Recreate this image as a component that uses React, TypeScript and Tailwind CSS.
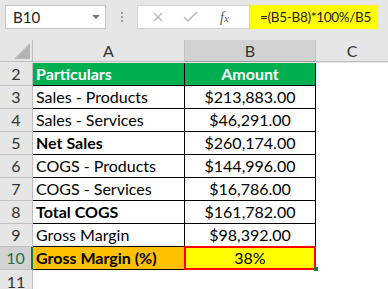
import React from "react";

interface Row {
  n: number;
  label: string;
  amount: string;
  bold?: boolean;
}

const rows: Row[] = [
  { n: 3, label: "Sales - Products", amount: "$213,883.00" },
  { n: 4, label: "Sales - Services", amount: "$46,291.00" },
  { n: 5, label: "Net Sales", amount: "$260,174.00", bold: true },
  { n: 6, label: "COGS - Products", amount: "$144,996.00" },
  { n: 7, label: "COGS - Services", amount: "$16,786.00" },
  { n: 8, label: "Total COGS", amount: "$161,782.00", bold: true },
  { n: 9, label: "Gross Margin", amount: "$98,392.00" },
];

const font = { fontFamily: "Lato, 'Open Sans', sans-serif" };

export default function App() {
  return (
    <div className="w-[388px] h-[289px] overflow-hidden bg-[#e6e6e6] text-[16px]" style={font}>
      {/* formula bar */}
      <div className="flex items-center h-[40px] pb-[6px] pl-[5px]">
        <div className="flex shrink-0 items-center justify-between w-[101px] h-[24px] bg-white border border-[#c6c6c6] pl-[7px] pr-[5px] text-[#222] text-[15px]">
          <span>B10</span>
          <span className="w-0 h-0 border-l-[4px] border-r-[4px] border-t-[4px] border-l-transparent border-r-transparent border-t-[#777]" />
        </div>
        <div className="flex shrink-0 flex-col gap-[2px] w-[31px] items-center">
          <span className="w-[2px] h-[2px] bg-[#999]" />
          <span className="w-[2px] h-[2px] bg-[#999]" />
          <span className="w-[2px] h-[2px] bg-[#999]" />
        </div>
        <div className="flex shrink-0 items-center w-[113px] h-[24px] bg-white border border-[#d4d4d4]">
          <svg width="40" height="24" viewBox="0 0 40 24">
            <path d="M16 8 L24 16 M24 8 L16 16" stroke="#b8b8b8" strokeWidth="1.3" />
          </svg>
          <svg width="26" height="24" viewBox="0 0 26 24">
            <path d="M6 12 L10 16 L19 7" stroke="#b8b8b8" strokeWidth="1.5" fill="none" />
          </svg>
          <span className="ml-[16px] italic text-[#555] text-[14px]" style={{ fontFamily: "'Liberation Serif', serif" }}>
            f<span className="text-[11px]">x</span>
          </span>
        </div>
        <div className="flex shrink-0 items-center w-[128px] h-[24px] bg-[#ffff00] pl-[10px] text-[#222] text-[13.5px] tracking-[-0.3px] whitespace-nowrap">
          =(B5-B8)*100%/B5
        </div>
      </div>

      {/* sheet */}
      <div className="grid grid-cols-[33px_152px_131px_1fr] auto-rows-[23px]">
        {/* column headers */}
        <div className="relative bg-[#e6e6e6] border-r border-b border-[#bfbfbf] h-[22px]">
          <svg className="absolute right-[2px] bottom-[2px]" width="16" height="16" viewBox="0 0 16 16">
            <path d="M16 0 L16 16 L0 16 Z" fill="#b5b5b5" />
          </svg>
        </div>
        <div className="flex items-center justify-center bg-[#e6e6e6] border-r border-b border-[#bfbfbf] text-[#333] h-[22px]">A</div>
        <div className="flex items-center justify-center bg-[#d2d2d2] border-r border-b border-b-[#9c9c9c] border-r-[#bfbfbf] text-[#333] h-[22px]">B</div>
        <div className="flex items-center justify-center bg-[#e6e6e6] border-b border-[#bfbfbf] text-[#333] h-[22px]">C</div>

        {/* row 2 */}
        <div className="flex items-center justify-center bg-[#e6e6e6] border-r border-b border-[#bfbfbf] text-[#333]">2</div>
        <div className="flex items-center pl-[3px] bg-[#00b050] text-white font-bold border-r border-b border-black">Particulars</div>
        <div className="flex items-center justify-center bg-[#00b050] text-white font-bold border-r border-b border-black">Amount</div>
        <div className="bg-white" />

        {rows.map((r) => (
          <React.Fragment key={r.n}>
            <div className="flex items-center justify-center bg-[#e6e6e6] border-r border-b border-[#bfbfbf] text-[#333]">{r.n}</div>
            <div className={`flex items-center pl-[3px] bg-white text-black border-r border-b border-black ${r.bold ? "font-bold" : ""}`}>{r.label}</div>
            <div className="flex items-center justify-center bg-white text-black border-r border-b border-black">{r.amount}</div>
            <div className="bg-white" />
          </React.Fragment>
        ))}

        {/* row 10 */}
        <div className="flex items-center justify-center bg-[#d2d2d2] border-r-2 border-r-[#217346] border-b border-b-[#bfbfbf] text-[#217346]">10</div>
        <div className="flex items-center pl-[3px] bg-[#ffc000] text-black font-bold border-r border-b border-black">Gross Margin (%)</div>
        <div className="relative flex items-center justify-center bg-[#ffff00] text-black border-[2px] border-[#ff0000] ml-[-1px] mt-[-1px]">
          38%
          <span className="absolute right-[-4px] bottom-[-3px] w-[4px] h-[4px] bg-[#217346]" />
        </div>
        <div className="bg-white" />

        {/* row 11 */}
        <div className="flex items-center justify-center bg-[#e6e6e6] border-r border-[#bfbfbf] text-[#333]">11</div>
        <div className="bg-white" />
        <div className="bg-white" />
        <div className="bg-white" />
      </div>
    </div>
  );
}
